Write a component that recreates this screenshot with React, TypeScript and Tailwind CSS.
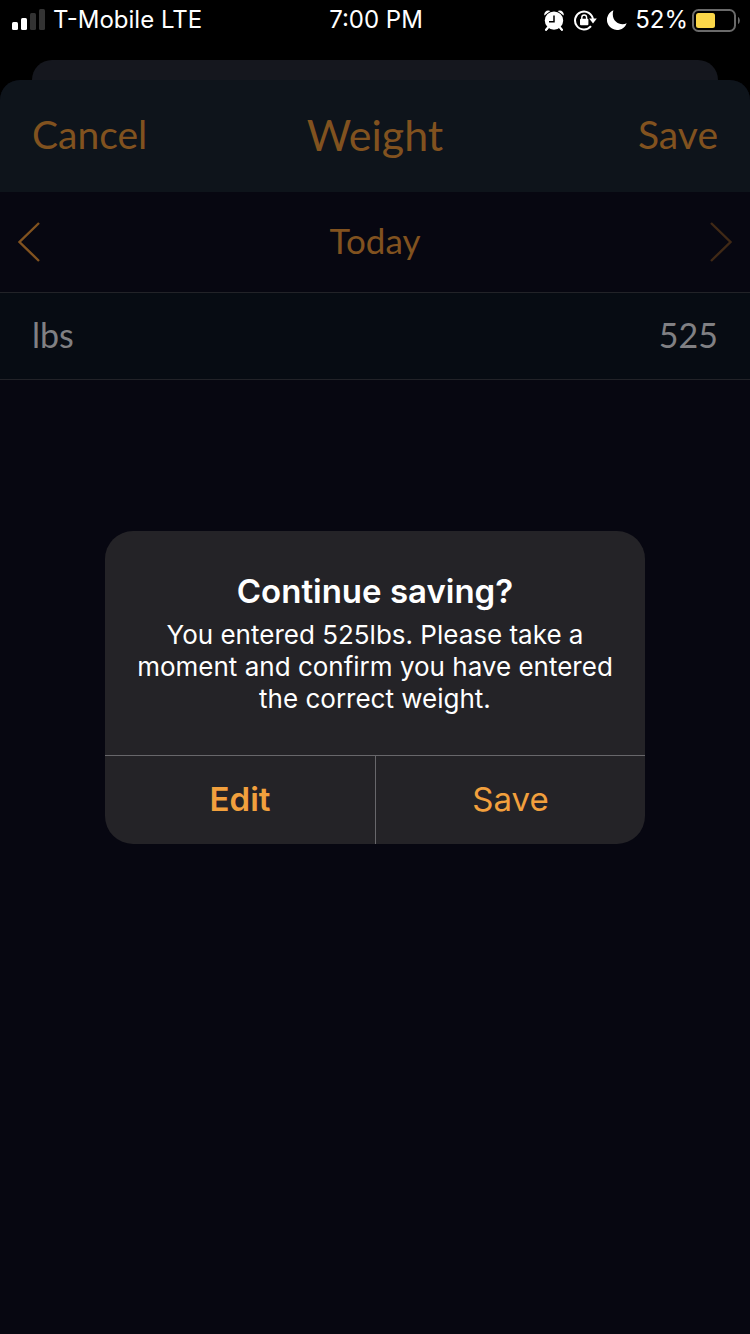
import React from "react";

function SignalIcon() {
  return (
    <svg width="33" height="22" viewBox="0 0 33 22" aria-hidden="true">
      <rect x="0" y="13" width="6" height="8" rx="1.5" fill="#fff" />
      <rect x="9" y="9" width="6" height="12" rx="1.5" fill="#fff" />
      <rect x="18" y="4" width="6" height="17" rx="1.5" fill="#333" />
      <rect x="27" y="0" width="6" height="21" rx="1.5" fill="#333" />
    </svg>
  );
}

function AlarmIcon() {
  return (
    <svg width="20" height="21" viewBox="0 0 20 21" aria-hidden="true">
      <path d="M.4 5.600C-.6 2 3-.8 6.400 1zM19.600 5.600C20.600 2 17-.8 13.600 1z" fill="#fff" />
      <path d="M4 17.5 2 19.800M16 17.5 18 19.800" stroke="#fff" strokeWidth="2" strokeLinecap="round" />
      <circle cx="10" cy="10.800" r="9.800" fill="#000" />
      <path d="M4.500 17 2.200 19.700M15.500 17 17.800 19.700" stroke="#fff" strokeWidth="2" strokeLinecap="round" />
      <circle cx="10" cy="10.600" r="9.200" fill="#fff" />
      <path d="M10 5.500V11.700H5" fill="none" stroke="#000" strokeWidth="1.500" />
    </svg>
  );
}

function RotationLockIcon() {
  return (
    <svg width="23" height="21" viewBox="0 0 23 21" aria-hidden="true">
      <path d="M17 16.200A9 9 0 1 1 19 9.500" fill="none" stroke="#fff" strokeWidth="2" />
      <path d="M15.200 8.400h7.600l-3.800 5.200z" fill="#fff" />
      <rect x="6" y="8.800" width="8.400" height="6.400" rx="1" fill="#fff" />
      <path d="M7.800 9V7.400a2.400 2.400 0 0 1 4.800 0V9" fill="none" stroke="#fff" strokeWidth="1.400" />
    </svg>
  );
}

function MoonIcon() {
  return (
    <svg width="20" height="20" viewBox="0 0 20 20" aria-hidden="true">
      <path d="M6.400.3A10.200 10.200 0 1 0 19.700 13.300C13 16.600 3.200 11 6.400.3Z" fill="#fff" />
    </svg>
  );
}

function BatteryIcon() {
  return (
    <svg width="48" height="23" viewBox="0 0 48 23" aria-hidden="true">
      <rect x="1" y="1" width="42" height="21" rx="5.5" fill="none" stroke="#6a6a6a" strokeWidth="2" />
      <rect x="4" y="4" width="19" height="15" rx="2.5" fill="#fbd749" />
      <path d="M46 8c2.400 1 2.400 6 0 7z" fill="#6a6a6a" />
    </svg>
  );
}

function StatusBar() {
  return (
    <div className="grid h-10 grid-cols-3 items-center pl-3 pr-[10px] text-2xl text-white">
      <div className="flex items-center gap-2">
        <SignalIcon />
        <span className="whitespace-nowrap">T-Mobile LTE</span>
      </div>
      <span className="text-center">7:00 PM</span>
      <div className="flex items-center justify-end">
        <div className="flex items-center gap-[10px]">
          <AlarmIcon />
          <RotationLockIcon />
          <MoonIcon />
        </div>
        <span className="ml-2 mr-1">52%</span>
        <BatteryIcon />
      </div>
    </div>
  );
}

function Chevron({ flip = false }: { flip?: boolean }) {
  return (
    <svg width="24" height="40" viewBox="0 0 24 40" fill="none" stroke="currentColor" strokeWidth="2.400" aria-hidden="true">
      <path d={flip ? "M2 1 21.500 20 2 39" : "M22 1 2.500 20 22 39"} />
    </svg>
  );
}

function WeightSheet() {
  return (
    <main className="flex-1 overflow-hidden rounded-t-[20px] bg-[#070711] font-['Lato',sans-serif] text-[#81521f]">
      <header className="grid h-28 grid-cols-3 items-center bg-[#0e141b] px-8 pb-1">
        <button type="button" className="text-left text-[39px]">Cancel</button>
        <h1 className="text-center text-[43px] leading-none">Weight</h1>
        <button type="button" className="text-right text-[39px]">Save</button>
      </header>
      <nav className="flex h-[100px] items-center justify-between px-[17px]">
        <button type="button" aria-label="Previous day"><Chevron /></button>
        <span className="pb-1 text-[35px]">Today</span>
        <button type="button" aria-label="Next day" className="text-[#402916]"><Chevron flip /></button>
      </nav>
      <div className="flex h-[88px] items-center justify-between border-y border-[#222328] bg-[#070c13] px-8 pb-1 text-[34px] text-[#808083]">
        <label htmlFor="weight">lbs</label>
        <input id="weight" type="text" inputMode="numeric" defaultValue="525" className="w-40 bg-transparent text-right outline-none" />
      </div>
    </main>
  );
}

function ConfirmAlert() {
  return (
    <div className="absolute inset-0 flex items-center justify-center pt-10">
      <div
        role="alertdialog"
        aria-labelledby="alert-title"
        aria-describedby="alert-text"
        className="w-[540px] overflow-hidden rounded-[28px] bg-[#242327] text-center"
      >
        <div className="px-8 pt-10 pb-10">
          <h2 id="alert-title" className="text-[33px] leading-10 font-semibold text-white">Continue saving?</h2>
          <p id="alert-text" className="mt-2 text-[26px] leading-8 text-white">
            You entered 525lbs. Please take a moment and confirm you have entered the correct weight.
          </p>
        </div>
        <div className="grid h-[89px] grid-cols-2 border-t border-[#68676b] text-[33px] text-[#f2a03d]">
          <button type="button" className="font-semibold">Edit</button>
          <button type="button" className="border-l border-[#68676b]">Save</button>
        </div>
      </div>
    </div>
  );
}

export default function App() {
  return (
    <div className="relative flex min-h-screen flex-col bg-black font-['Inter',sans-serif]">
      <StatusBar />
      <div className="mx-8 mt-5 h-5 rounded-t-[20px] bg-[#15171e]" />
      <WeightSheet />
      <ConfirmAlert />
    </div>
  );
}
